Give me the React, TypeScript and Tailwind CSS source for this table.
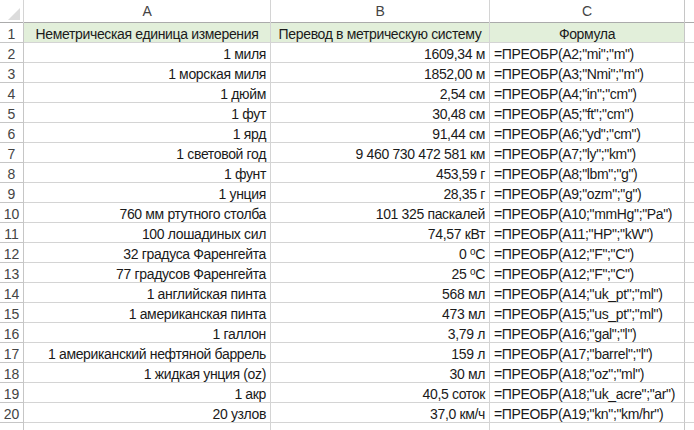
import React from 'react'

type Row = [string, React.ReactNode, string]

const deg = (n: string) => (
  <>
    {n}{' '}
    <span className="inline-block align-top leading-none text-[10px] mt-[4px]">o</span>C
  </>
)

const rows: Row[] = [
  ['1 миля', '1609,34 м', '=ПРЕОБР(A2;"mi";"m")'],
  ['1 морская миля', '1852,00 м', '=ПРЕОБР(A3;"Nmi";"m")'],
  ['1 дюйм', '2,54 см', '=ПРЕОБР(A4;"in";"cm")'],
  ['1 фут', '30,48 см', '=ПРЕОБР(A5;"ft";"cm")'],
  ['1 ярд', '91,44 см', '=ПРЕОБР(A6;"yd";"cm")'],
  ['1 световой год', '9 460 730 472 581 км', '=ПРЕОБР(A7;"ly";"km")'],
  ['1 фунт', '453,59 г', '=ПРЕОБР(A8;"lbm";"g")'],
  ['1 унция', '28,35 г', '=ПРЕОБР(A9;"ozm";"g")'],
  ['760 мм ртутного столба', '101 325 паскалей', '=ПРЕОБР(A10;"mmHg";"Pa")'],
  ['100 лошадиных сил', '74,57 кВт', '=ПРЕОБР(A11;"HP";"kW")'],
  ['32 градуса Фаренгейта', deg('0'), '=ПРЕОБР(A12;"F";"C")'],
  ['77 градусов Фаренгейта', deg('25'), '=ПРЕОБР(A12;"F";"C")'],
  ['1 английская пинта', '568 мл', '=ПРЕОБР(A14;"uk_pt";"ml")'],
  ['1 американская пинта', '473 мл', '=ПРЕОБР(A15;"us_pt";"ml")'],
  ['1 галлон', '3,79 л', '=ПРЕОБР(A16;"gal";"l")'],
  ['1 американский нефтяной баррель', '159 л', '=ПРЕОБР(A17;"barrel";"l")'],
  ['1 жидкая унция (oz)', '30 мл', '=ПРЕОБР(A18;"oz";"ml")'],
  ['1 акр', '40,5 соток', '=ПРЕОБР(A18;"uk_acre";"ar")'],
  ['20 узлов', '37,0 км/ч', '=ПРЕОБР(A19;"kn";"km/hr")'],
]

const grid = 'grid grid-cols-[24px_247px_219px_195px_1fr]'
const cell = 'border-r border-b border-[#d4d4d4] h-[20px] leading-[22px] px-[4px] whitespace-nowrap overflow-hidden'
const rowNum = 'border-r border-b border-[#c6c6c6] h-[20px] leading-[22px] text-center text-[#444] bg-white tracking-normal'

export default function App() {
  return (
    <div
      className="w-[694px] h-[430px] overflow-hidden bg-white text-[14px] tracking-[-0.35px] text-[#1a1a1a]"
      style={{ fontFamily: '"Liberation Sans", Arial, sans-serif' }}
    >
      {/* Column headers */}
      <div className={`${grid} h-[23px] border-b border-[#ababab] text-[#444]`}>
        <div className="relative border-r border-[#d4d4d4]">
          <div className="absolute right-[3px] bottom-[3px] w-0 h-0 border-l-[12px] border-l-transparent border-b-[12px] border-b-[#dcdcdc]" />
        </div>
        <div className="border-r border-[#d4d4d4] text-center leading-[23px]">A</div>
        <div className="border-r border-[#d4d4d4] text-center leading-[23px]">B</div>
        <div className="border-r border-[#c6c6c6] text-center leading-[23px]">C</div>
        <div />
      </div>

      {/* Row 1: titles */}
      <div className={grid}>
        <div className={rowNum}>1</div>
        <div className={`${cell} bg-[#e2efda] text-center`}>Неметрическая единица измерения</div>
        <div className={`${cell} bg-[#e2efda] text-center`}>Перевод в метрическую систему</div>
        <div className={`${cell} bg-[#e2efda] text-center border-r-[#c6c6c6]`}>Формула</div>
        <div className={`${cell} border-r-0`} />
      </div>

      {rows.map(([a, b, c], i) => (
        <div key={i} className={grid}>
          <div className={rowNum}>{i + 2}</div>
          <div className={`${cell} text-right`}>{a}</div>
          <div className={`${cell} text-right`}>{b}</div>
          <div className={`${cell} border-r-[#c6c6c6]`}>{c}</div>
          <div className={`${cell} border-r-0`} />
        </div>
      ))}

      <div className={grid}>
        <div className={rowNum} />
        <div className={cell} />
        <div className={cell} />
        <div className={`${cell} border-r-[#c6c6c6]`} />
        <div className={`${cell} border-r-0`} />
      </div>
    </div>
  )
}
